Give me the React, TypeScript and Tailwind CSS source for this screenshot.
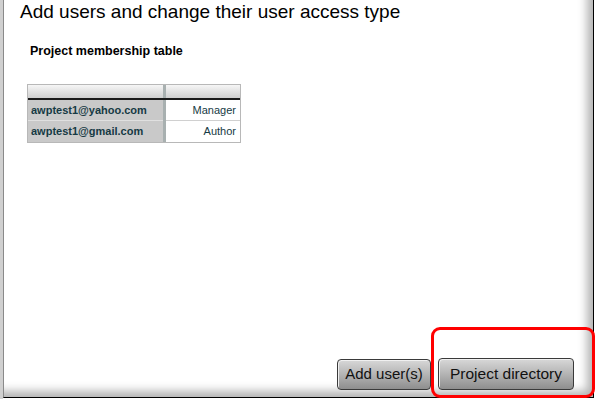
export default function App() {
  const rows = [
    { email: "awptest1@yahoo.com", role: "Manager" },
    { email: "awptest1@gmail.com", role: "Author" },
  ];

  return (
    <div
      className="relative flex h-[399px] w-[595px] bg-white"
      style={{ fontFamily: '"Liberation Sans", Arial, sans-serif' }}
    >
      {/* left window strip */}
      <div className="w-[3px] bg-[#d0d0d0]" />

      {/* main panel */}
      <div className="flex h-[398px] w-[591px] flex-col border-b border-l border-r border-b-black border-l-[#8a8a8a] border-r-black shadow-[inset_-14px_-14px_10px_-8px_rgba(0,0,0,0.3)]">
        <h1 className="pl-[16px] pt-[1px] text-[19px] leading-[22px] text-black">
          Add users and change their user access type
        </h1>

        <h2 className="mt-[20px] pl-[26px] text-[12.5px] font-bold leading-[16px] text-black">
          Project membership table
        </h2>

        <div className="ml-[23px] mt-[25px] w-[214px] border border-[#b8b8b8] bg-white">
          <div className="flex h-[15px] border-b-2 border-b-[#1a1a1a]">
            <div className="w-[135px] bg-gradient-to-b from-[#f6f6f6] to-[#cfcfcf]" />
            <div className="w-[3px] bg-[#a8b0b0]" />
            <div className="flex-1 bg-gradient-to-b from-[#f6f6f6] to-[#cfcfcf]" />
          </div>
          {rows.map((r, i) => (
            <div key={r.email} className="flex h-[21px]">
              <div
                className={`flex w-[135px] items-center bg-[#c9c9c9] pl-[3px] text-[11px] font-bold text-[#163a44] ${
                  i === 0 ? "border-b border-b-[#e0e0e0]" : ""
                }`}
              >
                {r.email}
              </div>
              <div className="w-[3px] bg-[#a8b0b0]" />
              <div
                className={`flex flex-1 items-center justify-end pr-[4px] text-[11px] text-[#163a44] ${
                  i === 0 ? "border-b border-b-[#d0d0d0]" : ""
                }`}
              >
                {r.role}
              </div>
            </div>
          ))}
        </div>

        <div className="mt-auto flex items-end justify-end gap-[7px] pb-[7px] pr-[19px]">
          <button className="h-[31px] w-[94px] rounded-[4px] border border-[#3a3a3a] bg-gradient-to-b from-[#d8d8d8] via-[#b4b4b4] to-[#8e8e8e] text-[15px] text-[#111] shadow-[inset_1px_1px_0_#f0f0f0]">
            Add user(s)
          </button>
          <button className="h-[32px] w-[136px] rounded-[4px] border border-[#3a3a3a] bg-gradient-to-b from-[#d8d8d8] via-[#b4b4b4] to-[#8e8e8e] text-[15.5px] text-[#111] shadow-[inset_1px_1px_0_#f0f0f0]">
            Project directory
          </button>
        </div>
      </div>

      {/* red highlight annotation */}
      <div className="absolute left-[431px] top-[327px] h-[71px] w-[164px] rounded-[9px] border-[3px] border-[#ff0000]" />
    </div>
  );
}
